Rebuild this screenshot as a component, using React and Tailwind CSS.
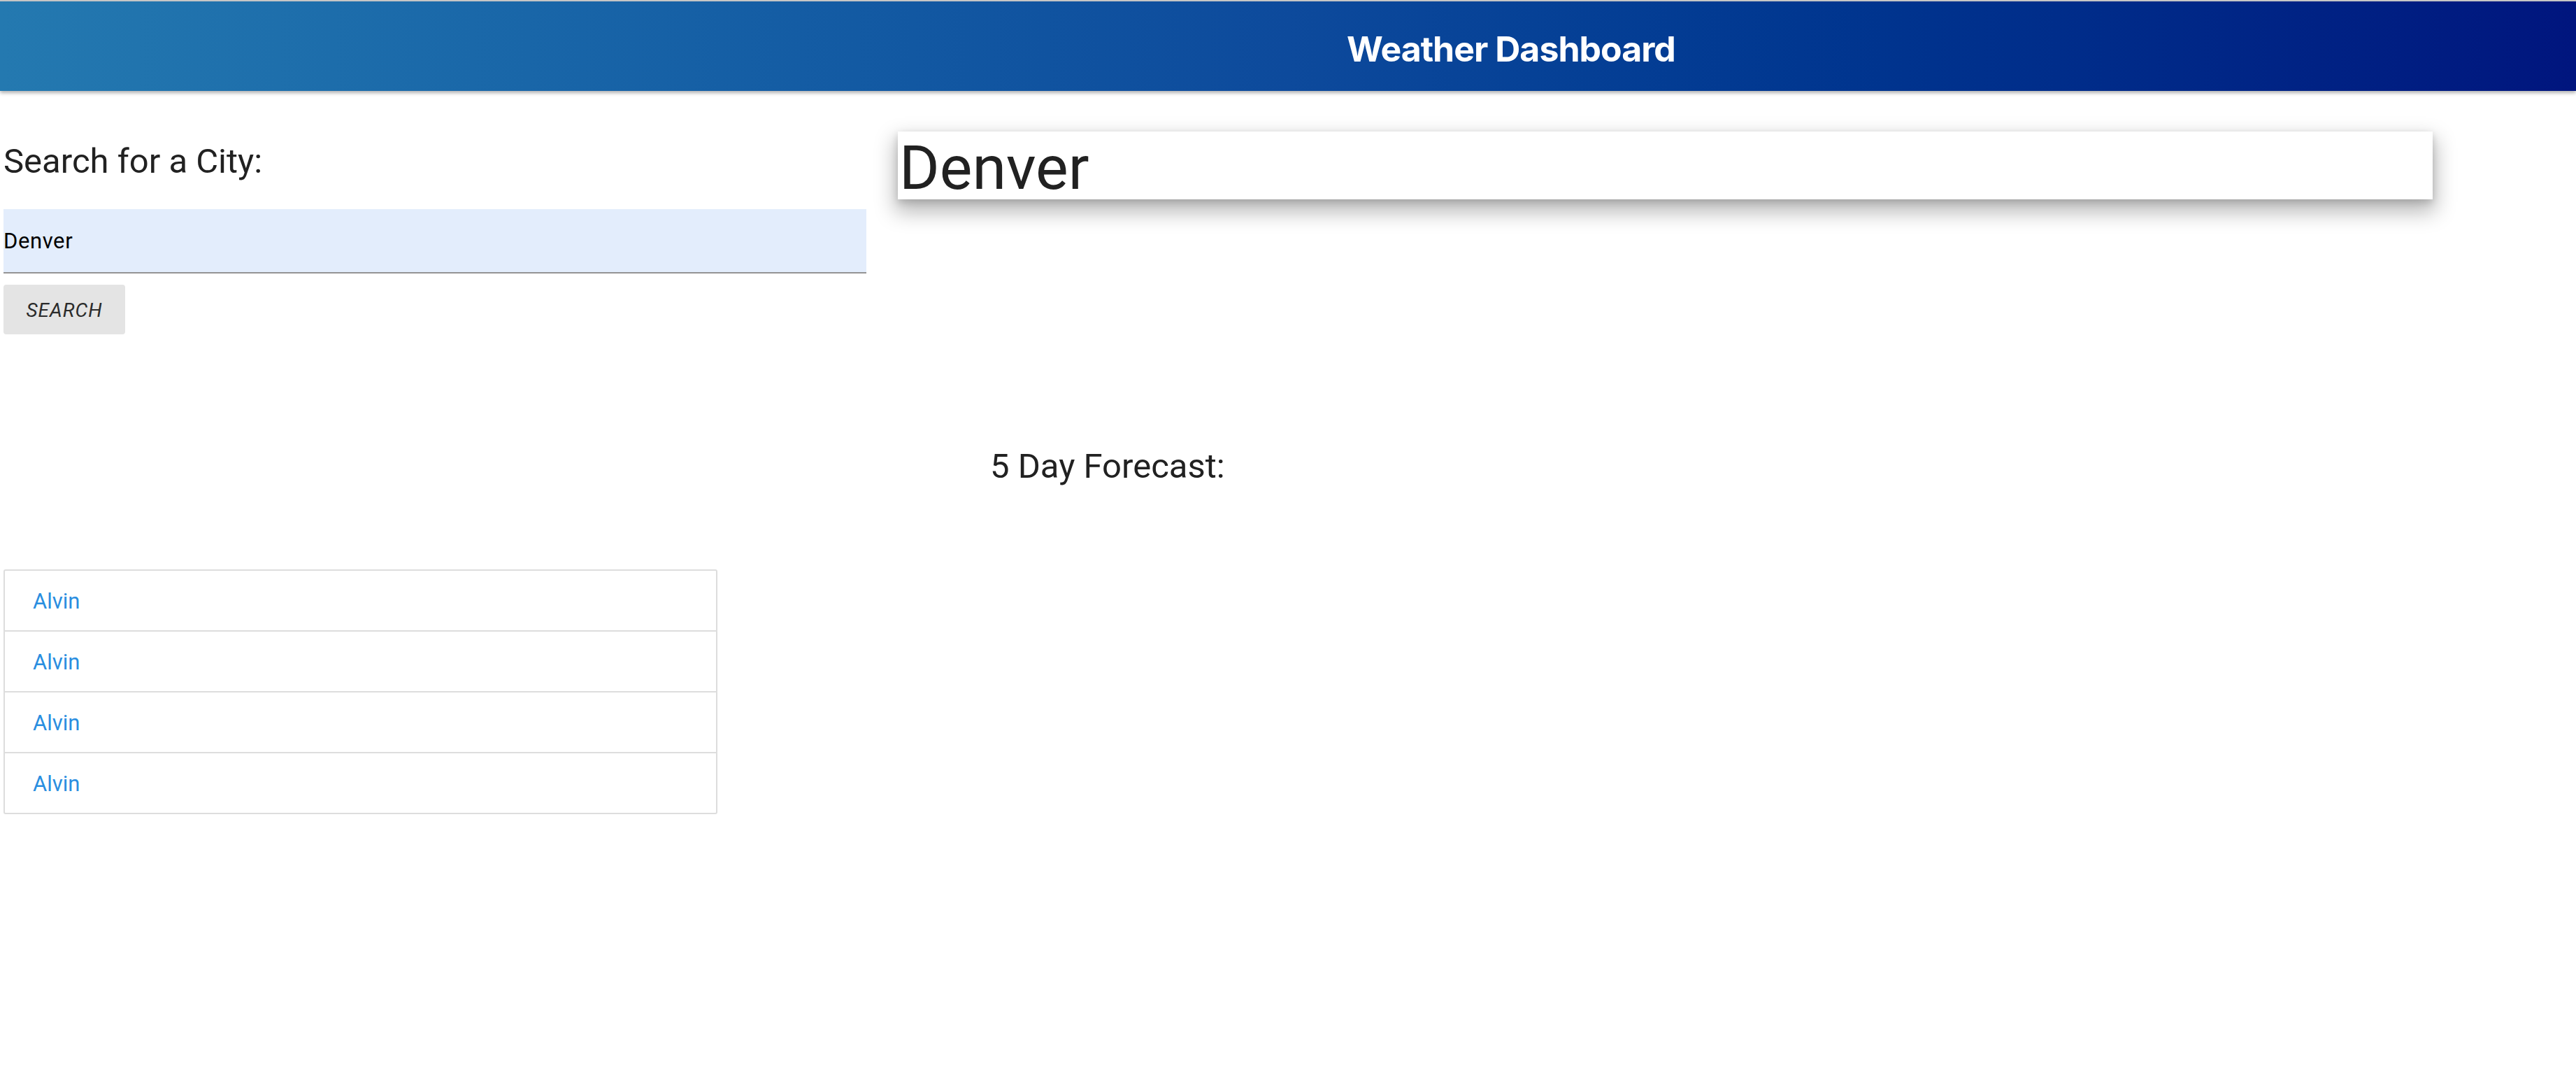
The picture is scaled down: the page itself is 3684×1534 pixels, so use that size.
import React, { useState } from 'react';

const savedCities = ['Alvin', 'Alvin', 'Alvin', 'Alvin'];

const App = () => {
    const [city, setCity] = useState('Denver');

    return (
        <div className="min-h-screen bg-white font-['Roboto',sans-serif] text-[#212121]">
            <div className="h-[2px] bg-[#c9c9c9]" />
            <header className="relative z-10 h-[128px] flex items-center pl-[1926px] pt-[8px] bg-gradient-to-r from-[#2479b0] via-[#0d4a9c] to-[#00157e] shadow-[0_3px_5px_rgba(0,0,0,0.3)]">
                <h1 className="font-['Inter',sans-serif] text-[50px] font-bold text-white tracking-[-1px] leading-none">Weather Dashboard</h1>
            </header>

            <main className="flex">
                {/* Search column */}
                <div className="w-[1239px] pl-[5px] shrink-0">
                    <h2 className="mt-[77px] text-[49px] leading-[48px] text-[#212121]">Search for a City:</h2>
                    <div className="mt-[44px]">
                        <input
                            value={city}
                            onChange={(e) => setCity(e.target.value)}
                            className="w-full h-[92px] bg-[#e3edfc] border-b-2 border-[#949494] outline-none text-[31px] tracking-[0.6px] text-black"
                        />
                    </div>
                    <button className="mt-[16px] w-[174px] h-[71px] pt-[2px] bg-[#e4e4e4] rounded-[4px] text-[28px] italic uppercase tracking-[1px] text-[#2b2b2b]">
                        Search
                    </button>

                    <ul className="mt-[336px] w-[1021px] border-2 border-[#dddddd] rounded-[3px]">
                        {savedCities.map((name, i) => (
                            <li
                                key={i}
                                className="h-[87px] flex items-center pl-[40px] pt-[4px] border-b-2 border-[#dddddd] last:border-b-0 last:h-[85px]"
                            >
                                <a className="text-[31px] text-[#2a8ee0]">{name}</a>
                            </li>
                        ))}
                    </ul>
                </div>

                {/* Weather column */}
                <div className="flex-1 pl-[45px]">
                    <div className="mt-[58px] w-[2195px] h-[97px] bg-white shadow-[0_14px_28px_4px_rgba(0,0,0,0.28),0_4px_10px_rgba(0,0,0,0.15)]">
                        <h2 className="text-[88px] leading-[97px] pl-[2px] pt-[3px] text-[#212121]">Denver</h2>
                    </div>
                    <h3 className="mt-[358px] ml-[132px] text-[49px] leading-[48px] text-[#212121]">5 Day Forecast:</h3>
                </div>
            </main>
        </div>
    );
};

export default App;
